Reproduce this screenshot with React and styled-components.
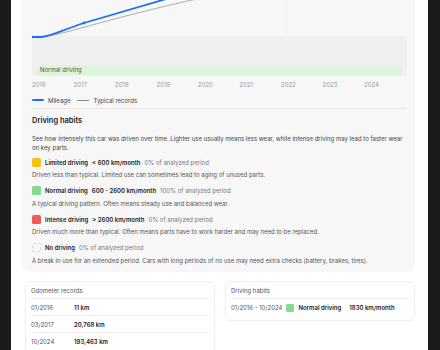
import styled, { createGlobalStyle } from "styled-components";

const GlobalStyle = createGlobalStyle`
  html, body {
    margin: 0;
    background: #1b1b1b;
  }
  body {
    font-family: Inter, "Noto Sans", sans-serif;
    -webkit-font-smoothing: antialiased;
  }
`;

const Page = styled.div`
  width: 440px;
  height: 350px;
  padding: 0 12px 0 11px;
  box-sizing: border-box;
  overflow: hidden;
`;

const Panel = styled.main`
  height: 350px;
  background: #ffffff;
  padding: 0 13px 0 11px;
  box-sizing: border-box;
  overflow: hidden;
`;

const HistoryCard = styled.section`
  background: #f7f7f7;
  border-radius: 0 0 8px 8px;
  padding: 0 8px 7px 10px;
`;

const Chart = styled.svg`
  display: block;
  width: 375px;
  height: 92px;
`;

const Legend = styled.div`
  display: flex;
  align-items: center;
  height: 8px;
  margin-top: 4px;
  font-size: 6px;
  color: #444;
`;

const LegendSwatch = styled.span`
  width: 12px;
  height: ${(p) => (p.$thick ? "2.5px" : "1px")};
  border-radius: 2px;
  background: ${(p) => p.$color};
  margin-right: 4px;
`;

const LegendLabel = styled.span`
  margin-right: 7px;
`;

const Divider = styled.hr`
  border: 0;
  border-top: 1px solid #e6e6e6;
  margin: 4px 0 7px;
`;

const Heading = styled.h3`
  margin: 0;
  font-size: 7.5px;
  line-height: 10px;
  font-weight: 600;
  color: #222;
`;

const Intro = styled.p`
  margin: 7.5px 0 5.5px;
  font-size: 6px;
  line-height: 9px;
  color: #444;
`;

const HabitList = styled.div`
  display: flex;
  flex-direction: column;
  gap: 6.5px;
`;

const HabitRow = styled.div`
  display: flex;
  align-items: center;
  height: 10px;
  gap: 4px;
  font-size: 6px;
  margin-bottom: 3px;
`;

const Swatch = styled.span`
  flex: none;
  width: ${(p) => p.$size || 9}px;
  height: ${(p) => p.$size || 9}px;
  border-radius: 1.5px;
  box-sizing: border-box;
  background: ${(p) => p.$color || "transparent"};
  border: ${(p) => (p.$color ? "none" : "1px dashed #d3d9e2")};
`;

const Strong = styled.span`
  font-weight: 600;
  color: #222;
  margin-right: ${(p) => p.$gap || 0}px;
`;

const Muted = styled.span`
  color: #777;
`;

const HabitText = styled.p`
  margin: 0;
  font-size: 6px;
  line-height: 9px;
  color: #555;
`;

const BottomGrid = styled.div`
  display: grid;
  grid-template-columns: 1fr 1fr;
  gap: 10px;
  align-items: start;
  margin: 9px 0 0 3px;
`;

const InfoCard = styled.section`
  border: 1px solid #eeeeee;
  border-radius: 6px;
  padding: 4px 5px 4px;
  font-size: 6px;
  background: #fff;
`;

const CardTitle = styled.div`
  line-height: 9px;
  color: #555;
  padding-bottom: 3.5px;
  border-bottom: 1px solid #f0f0f0;
`;

const RecordRow = styled.div`
  display: flex;
  align-items: center;
  height: 17px;
  gap: ${(p) => p.$gap || 0}px;
  border-bottom: ${(p) => (p.$last ? "none" : "1px solid #f0f0f0")};
  box-sizing: border-box;
`;

const DateCell = styled.span`
  color: #555;
  width: ${(p) => (p.$width ? `${p.$width}px` : "auto")};
`;

const habits = [
  {
    color: "#f6c417",
    name: "Limited driving",
    range: "< 600 km/month",
    share: "0% of analyzed period",
    text: "Driven less than typical. Limited use can sometimes lead to aging of unused parts.",
  },
  {
    color: "#86d98f",
    name: "Normal driving",
    range: "600 - 2600 km/month",
    share: "100% of analyzed period",
    text: "A typical driving pattern. Often means steady use and balanced wear.",
  },
  {
    color: "#f05a5a",
    name: "Intense driving",
    range: "> 2600 km/month",
    share: "0% of analyzed period",
    text: "Driven much more than typical. Often means parts have to work harder and may need to be replaced.",
  },
  {
    color: null,
    name: "No driving",
    range: null,
    share: "0% of analyzed period",
    text: "A break in use for an extended period. Cars with long periods of no use may need extra checks (battery, brakes, tires).",
  },
];

const records = [
  { date: "01/2016", km: "11 km" },
  { date: "03/2017", km: "20,768 km" },
  { date: "10/2024", km: "193,463 km" },
];

const years = [2016, 2017, 2018, 2019, 2020, 2021, 2022, 2023, 2024];

function MileageChart() {
  return (
    <Chart viewBox="0 0 375 92">
      <line x1="255" y1="0" x2="255" y2="36" stroke="#ececec" strokeWidth="0.6" />
      <rect x="0" y="36" width="375" height="40" rx="2" fill="#f0f0f0" />
      <rect x="5" y="65" width="365" height="10" rx="1" fill="#dcf4dc" />
      <text x="8" y="72.2" fontSize="6" fill="#3f5a40" fontFamily="Inter, sans-serif">
        Normal driving
      </text>
      <path
        d="M12 36.6 C 22 35.5, 30 33, 38 31 S 120 8, 170 -2"
        fill="none"
        stroke="#8a8a8a"
        strokeWidth="0.7"
      />
      <path
        d="M0 37 L 9 37 C 18 37, 30 30, 52 23 L 134 -1"
        fill="none"
        stroke="#1f6ff2"
        strokeWidth="1.8"
        strokeLinecap="round"
      />
      <circle cx="1" cy="37" r="1.3" fill="#1f6ff2" />
      <circle cx="6" cy="37" r="1.3" fill="#1f6ff2" />
      <circle cx="52" cy="23" r="1.4" fill="#1f6ff2" />
      {years.map((y, i) => (
        <text
          key={y}
          x={i * 41.5}
          y="87"
          fontSize="6"
          fill="#9a9a9a"
          fontFamily="Inter, sans-serif"
        >
          {y}
        </text>
      ))}
    </Chart>
  );
}

export default function App() {
  return (
    <>
      <GlobalStyle />
      <Page>
        <Panel>
          <HistoryCard>
            <MileageChart />
            <Legend>
              <LegendSwatch $color="#1f6ff2" $thick />
              <LegendLabel>Mileage</LegendLabel>
              <LegendSwatch $color="#8a8a8a" />
              <LegendLabel>Typical records</LegendLabel>
            </Legend>
            <Divider />
            <Heading>Driving habits</Heading>
            <Intro>
              See how intensely this car was driven over time. Lighter use usually means less
              wear, while intense driving may lead to faster wear on key parts.
            </Intro>
            <HabitList>
              {habits.map((h) => (
                <div key={h.name}>
                  <HabitRow>
                    <Swatch $color={h.color} />
                    <Strong>{h.name}</Strong>
                    {h.range && <Strong>{h.range}</Strong>}
                    <Muted>{h.share}</Muted>
                  </HabitRow>
                  <HabitText>{h.text}</HabitText>
                </div>
              ))}
            </HabitList>
          </HistoryCard>
          <BottomGrid>
            <InfoCard>
              <CardTitle>Odometer records</CardTitle>
              {records.map((r, i) => (
                <RecordRow key={r.date} $last={i === records.length - 1}>
                  <DateCell $width={43}>{r.date}</DateCell>
                  <Strong>{r.km}</Strong>
                </RecordRow>
              ))}
            </InfoCard>
            <InfoCard>
              <CardTitle>Driving habits</CardTitle>
              <RecordRow $last $gap={4}>
                <DateCell>01/2016 - 10/2024</DateCell>
                <Swatch $color="#86d98f" $size={8} />
                <Strong $gap={4}>Normal driving</Strong>
                <Strong>1830 km/month</Strong>
              </RecordRow>
            </InfoCard>
          </BottomGrid>
        </Panel>
      </Page>
    </>
  );
}
